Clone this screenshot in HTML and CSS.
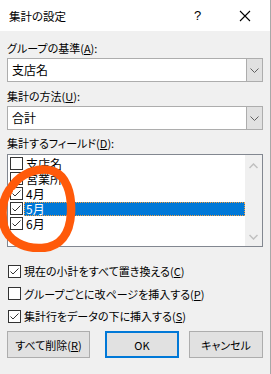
FILE: index.html
```html
<!DOCTYPE html>
<html lang="ja">
<head>
  <meta charset="UTF-8" />
  <title>集計の設定</title>
  <link rel="stylesheet" href="styles.css">
</head>
<body>
  <div class="dialog">
    <div class="titlebar">
      <span class="title">集計の設定</span>
      <span class="help">?</span>
      <svg class="close" width="12" height="12" viewBox="0 0 12 12"><path d="M1 1 L11 11 M11 1 L1 11" stroke="#000" stroke-width="1.1" fill="none"/></svg>
    </div>

    <div class="content">
      <div class="label label-first">グループの基準(<u>A</u>):</div>
      <div class="combo">
        <span class="combo-text">支店名</span>
        <span class="combo-btn"><svg width="9" height="5" viewBox="0 0 9 5"><polyline points="0.5,0.5 4.5,4.5 8.5,0.5" stroke="#606060" fill="none"/></svg></span>
      </div>

      <div class="label">集計の方法(<u>U</u>):</div>
      <div class="combo">
        <span class="combo-text">合計</span>
        <span class="combo-btn"><svg width="9" height="5" viewBox="0 0 9 5"><polyline points="0.5,0.5 4.5,4.5 8.5,0.5" stroke="#606060" fill="none"/></svg></span>
      </div>

      <div class="label label-list">集計するフィールド(<u>D</u>):</div>
      <div class="listbox">
        <div class="items">
          <div class="item"><span class="box"></span><span class="item-text">支店名</span></div>
          <div class="item"><span class="box"></span><span class="item-text">営業所</span></div>
          <div class="item"><span class="box checked"></span><span class="item-text">4月</span></div>
          <div class="item"><span class="box checked"></span><span class="item-text selected">5月</span></div>
          <div class="item"><span class="box checked"></span><span class="item-text">6月</span></div>
        </div>
        <div class="scrollbar">
          <svg width="9" height="6" viewBox="0 0 9 6"><polyline points="0.5,5 4.5,1 8.5,5" stroke="#c0c0c0" stroke-width="1.5" fill="none"/></svg>
          <svg width="9" height="6" viewBox="0 0 9 6"><polyline points="0.5,1 4.5,5 8.5,1" stroke="#c0c0c0" stroke-width="1.5" fill="none"/></svg>
        </div>
      </div>

      <div class="options">
        <div class="option"><span class="box checked"></span>現在の小計をすべて置き換える(<u>C</u>)</div>
        <div class="option"><span class="box"></span>グループごとに改ページを挿入する(<u>P</u>)</div>
        <div class="option"><span class="box checked"></span>集計行をデータの下に挿入する(<u>S</u>)</div>
      </div>

      <div class="buttons">
        <button class="btn btn-wide">すべて削除(<u>R</u>)</button>
        <button class="btn btn-default">OK</button>
        <button class="btn">キャンセル</button>
      </div>
    </div>

    <svg class="marker" width="80" height="92" viewBox="0 0 80 92">
      <path d="M12 26 C 22 12, 40 7, 53 11 C 66 16, 72 32, 71 53 C 70 74, 60 87, 42 88 C 25 89, 8 81, 4 66 C 1 52, 3 39, 9 30" stroke="#ff5a0a" stroke-width="8.5" fill="none" stroke-linecap="round"/>
    </svg>
  </div>
</body>
</html>
```

FILE: styles.css
```css
* {
  box-sizing: border-box;
  margin: 0;
  padding: 0;
}

body {
  font-family: "Noto Sans CJK JP", "Noto Sans", sans-serif;
  font-size: 11px;
  font-feature-settings: "palt";
  color: #000;
  background: #f0f0f0;
}

.dialog {
  position: relative;
  width: 271px;
  height: 374px;
  background: #f0f0f0;
  border-right: 1px solid #a8a8a8;
}

.titlebar {
  display: flex;
  align-items: center;
  height: 31px;
  background: #fff;
  padding-left: 9px;
}

.title {
  flex: 1;
  font-size: 11.5px;
}

.help {
  width: 12px;
  margin-right: 33px;
  font-family: "Liberation Sans", sans-serif;
  font-size: 13px;
}

.close {
  margin-right: 19px;
}

.content {
  padding: 0 7px 0 7px;
}

.label {
  height: 16px;
  line-height: 16px;
  margin-top: 6px;
  white-space: nowrap;
}

.label-first {
  margin-top: 9px;
}

.label-list {
  margin-top: 5px;
}

.combo {
  display: flex;
  height: 24px;
  margin-top: 2px;
  background: #fff;
  border: 1px solid #adadad;
}

.combo-text {
  flex: 1;
  line-height: 22px;
  padding-left: 4px;
  font-size: 12px;
}

.combo-btn {
  display: flex;
  align-items: center;
  justify-content: center;
  width: 16px;
  background: #e1e1e1;
  border-left: 1px solid #adadad;
}

.listbox {
  display: flex;
  height: 93px;
  margin-top: 3px;
  background: #fff;
  border: 1px solid #828790;
}

.items {
  flex: 1;
  padding-top: 1px;
  padding-left: 2px;
}

.item {
  display: flex;
  align-items: center;
  height: 15px;
}

.item .box {
  margin-right: 1px;
}

.item-text {
  flex: 1;
  height: 14px;
  line-height: 14px;
  padding-left: 2px;
  font-size: 12px;
}

.selected {
  background: #0078d7;
  color: #fff;
  outline: 1px dotted #f4a040;
  outline-offset: -1px;
}

.scrollbar {
  display: flex;
  flex-direction: column;
  justify-content: space-between;
  align-items: center;
  width: 17px;
  padding: 8px 0 6px;
  background: #f0f0f0;
}

.box {
  display: inline-block;
  flex: none;
  width: 13px;
  height: 13px;
  background: #fff;
  border: 1px solid #333;
}

.box.checked {
  background: #fff url("data:image/svg+xml,%3Csvg xmlns='http://www.w3.org/2000/svg' width='11' height='11'%3E%3Cpolyline points='1.5,5.5 4,8 9.5,2.5' stroke='%23333' stroke-width='1' fill='none'/%3E%3C/svg%3E") no-repeat center;
}

.options {
  margin-top: 16px;
}

.option {
  display: flex;
  align-items: center;
  height: 16px;
  margin-bottom: 6.5px;
  padding-left: 1px;
  white-space: nowrap;
}

.option .box {
  margin-right: 3px;
}

.buttons {
  display: flex;
  margin-top: 7px;
}

.btn {
  width: 74px;
  height: 27px;
  font-family: "Noto Sans CJK JP", "Noto Sans", sans-serif;
  font-size: 11px;
  font-feature-settings: "palt";
  background: #e1e1e1;
  border: 1px solid #adadad;
  color: #000;
}

.btn-wide {
  width: 83px;
}

.btn-default {
  margin: 0 10px 0 15px;
  border: 2px solid #0078d7;
}

.marker {
  position: absolute;
  left: 0;
  top: 160px;
}
```
